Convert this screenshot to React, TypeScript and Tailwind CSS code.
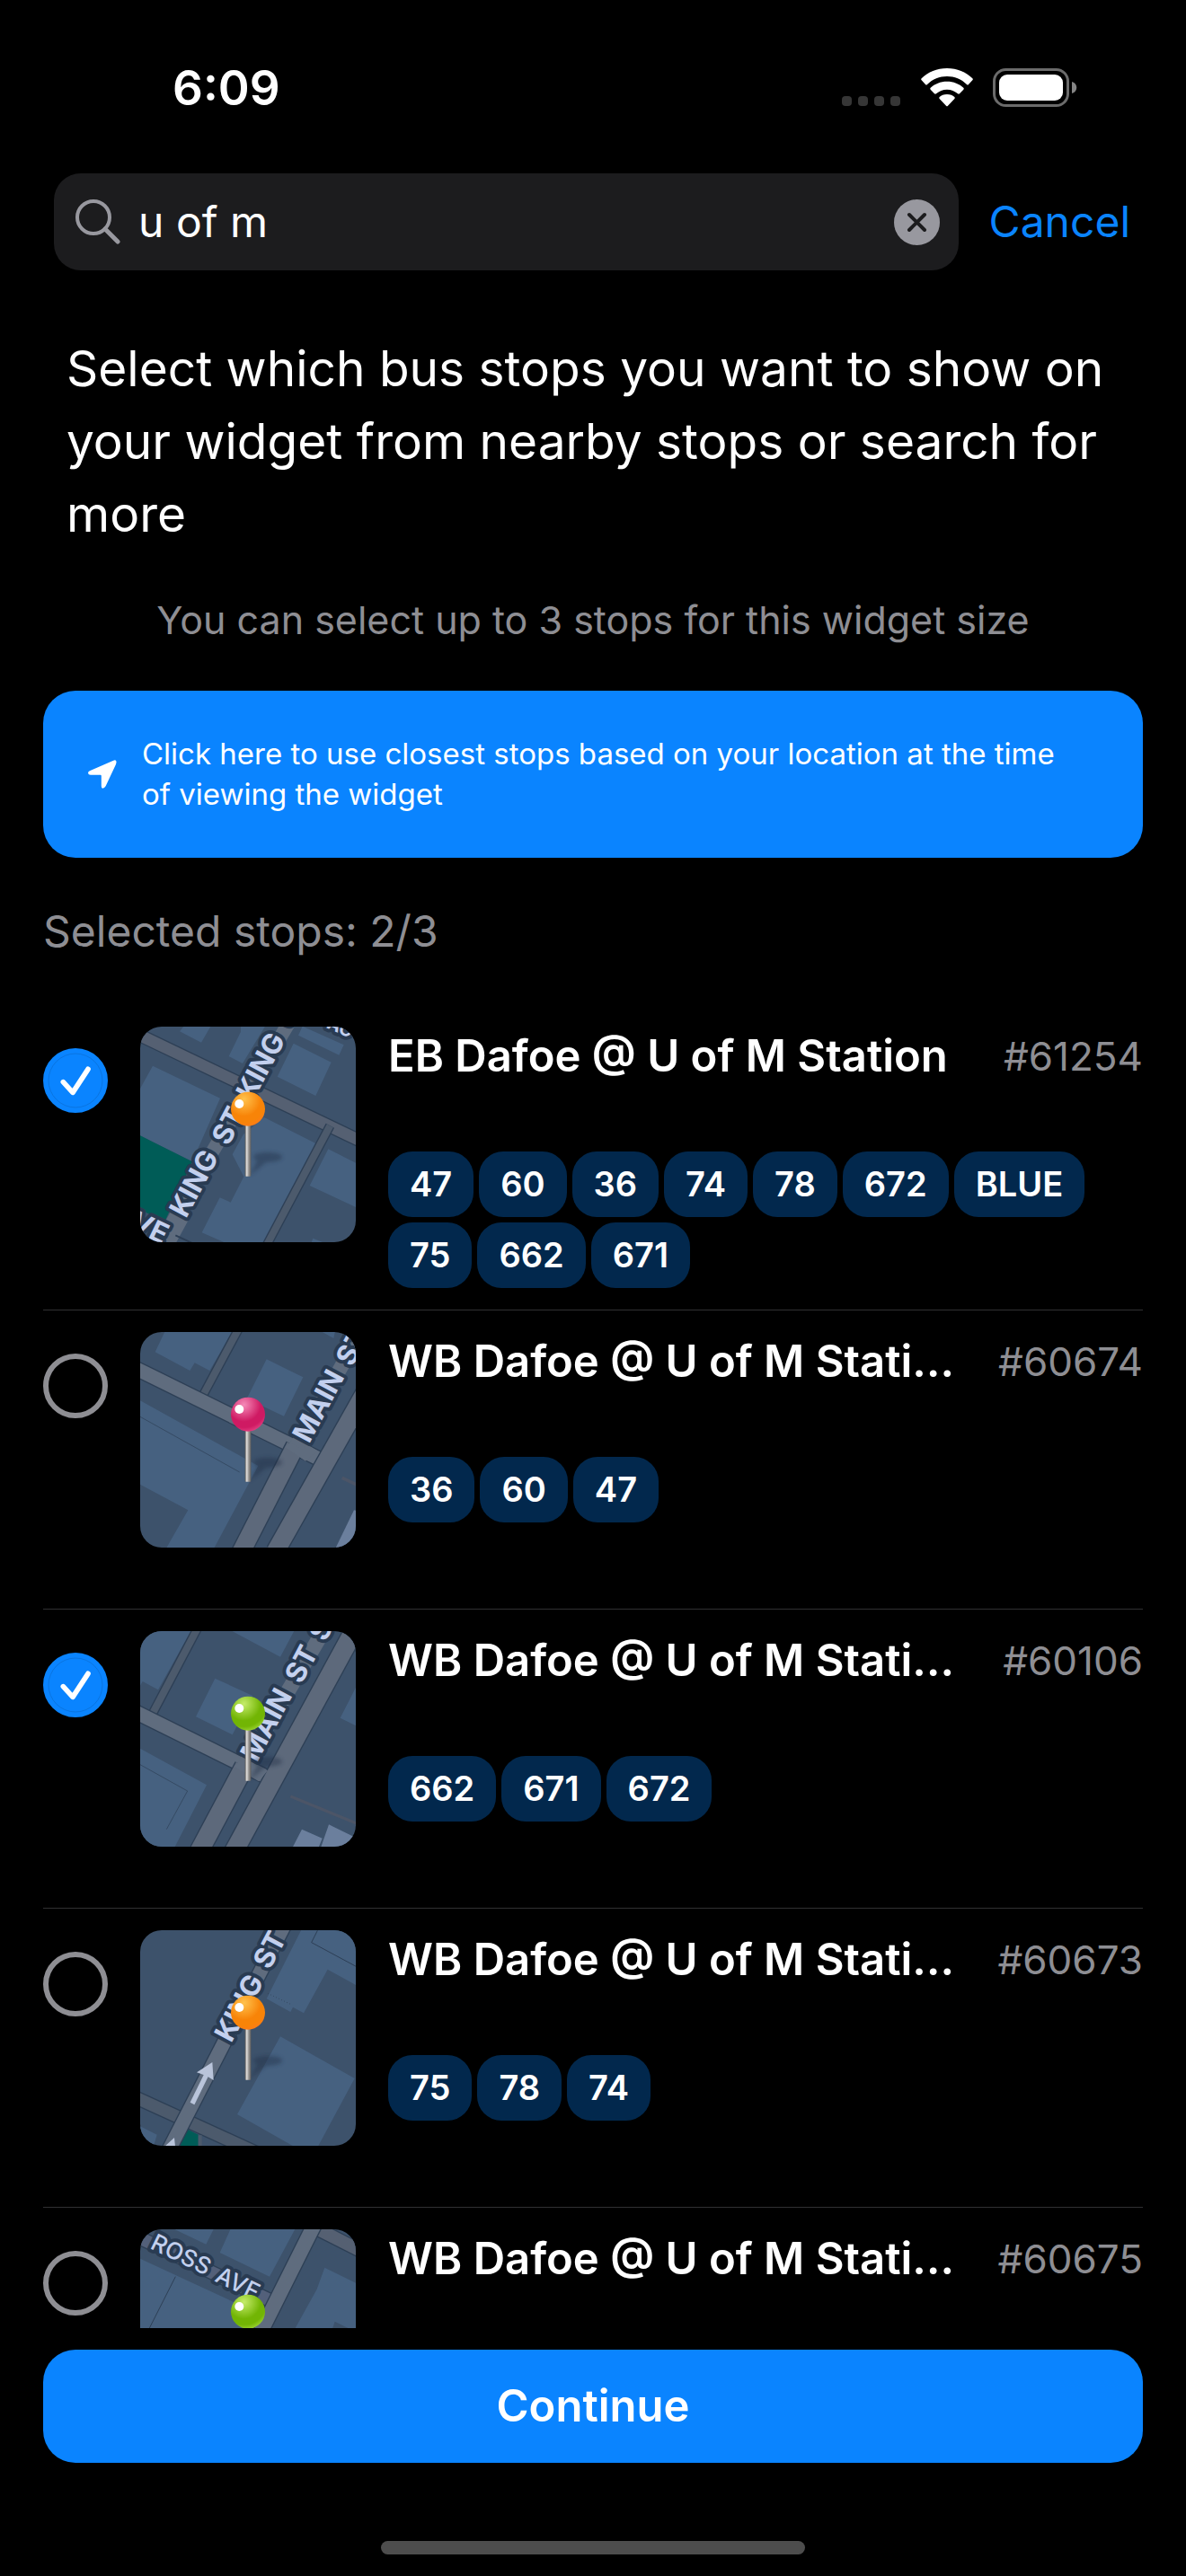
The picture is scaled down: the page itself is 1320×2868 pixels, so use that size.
import React, { useState } from "react";

type PinColor = "orange" | "pink" | "green";

type Stop = {
  name: string;
  code: string;
  routes: string[];
  pin: PinColor;
  map: () => React.ReactElement;
  selected: boolean;
};

const LAND = "#3d526b";
const BUILDING = "#466180";
const ROAD = "#5f6c7e";
const LANE = "#4c5a6c";
const EDGE = "#2d3f55";
const PARK = "#005c57";

const PIN_STOPS: Record<PinColor, [string, string, string]> = {
  orange: ["#ffc24d", "#f88408", "#ff7a1a"],
  pink: ["#f58ab8", "#cf1a63", "#e8488a"],
  green: ["#c5ec6a", "#72b504", "#a4da3c"],
};

function Road({ d, width, color = ROAD }: { d: string; width: number; color?: string }) {
  return (
    <>
      <path d={d} fill="none" stroke={EDGE} strokeWidth={width + 8} />
      <path d={d} fill="none" stroke={color} strokeWidth={width} />
    </>
  );
}

function Label({
  x,
  y,
  angle,
  size = 94,
  weight = 700,
  children,
}: {
  x: number;
  y: number;
  angle: number;
  size?: number;
  weight?: number;
  children: string;
}) {
  return (
    <text
      transform={`translate(${x} ${y}) rotate(${angle})`}
      fontFamily="Inter, sans-serif"
      fontSize={size}
      fontWeight={weight}
      fill="#c3d0ee"
      stroke="#293b52"
      strokeWidth={24}
      strokeLinejoin="round"
      paintOrder="stroke"
    >
      {children}
    </text>
  );
}

function KingStreetMap() {
  return (
    <>
      <path
        fill={BUILDING}
        d="M90 170L315 278L222 490L48 403V246zM200 30H288L252 92L180 55zM384 30H470L390 162L344 138L384 56zM560 95L686 158L634 270L506 206zM590 38L728 100L712 134L576 68zM462 342L640 432L470 760H330L254 727L314 610L350 626L394 540L356 466L392 400zM676 448L768 494V642L614 570zM625 746L660 760H620z"
      />
      <path fill={PARK} d="M48 403L222 490L130 690L48 650z" />
      <Road d="M30 60L790 424" width={38} color="#556072" />
      <Road d="M682 370L470 770" width={24} color={LANE} />
      <path d="M175 650L560 0" stroke={ROAD} strokeWidth={46} fill="none" />
      <path d="M180 670L120 780" stroke={ROAD} strokeWidth={66} fill="none" />
      <path d="M166 736L230 766" stroke={EDGE} strokeWidth={6} fill="none" />
      <Label x={201} y={682} angle={-62}>KING</Label>
      <Label x={342} y={440} angle={-62}>ST</Label>
      <Label x={424} y={290} angle={-62}>KING</Label>
      <Label x={552} y={44} angle={-62}>ST</Label>
      <Label x={8} y={712} angle={26}>VE</Label>
      <Label x={668} y={42} angle={24} size={60}>AC</Label>
    </>
  );
}

function MainStreetMap() {
  return (
    <>
      <path
        fill={BUILDING}
        d="M134 30H360L280 168L230 142L214 168L98 106zM470 130L592 190L528 320L404 262zM48 268L442 486L290 770H130L208 634L48 548zM640 30H700L694 60z"
      />
      <path d="M48 322L380 507" stroke={EDGE} strokeWidth={2} />
      <path fill="#6b7f9d" d="M762 634L790 640V770H696z" />
      <path d="M722 526L790 558" stroke="#4c5567" strokeWidth={11} />
      <Road d="M376 30L258 250" width={24} color={LANE} />
      <Road d="M20 154L660 470" width={46} />
      <Road d="M800 240L500 772" width={60} color="#5d697b" />
      <Road d="M566 420L380 784" width={60} color="#5d697b" />
      <path d="M532 424L566 390L640 436L600 470z" fill={ROAD} />
      <path d="M570 420L790 30" stroke={ROAD} strokeWidth={48} fill="none" />
      <Label x={612} y={414} angle={-62}>MAIN</Label>
      <Label x={756} y={158} angle={-62}>ST</Label>
    </>
  );
}

function MainStreetSouthMap() {
  return (
    <g transform="translate(0 -9)">
      <path
        fill={BUILDING}
        d="M48 40H222L108 244L56 216L48 230zM340 40H566L516 134zM298 206L424 264L356 394L234 334zM48 440L270 562L158 780H48zM768 236V364L716 338z"
      />
      <path d="M48 494L206 582L136 710" stroke={EDGE} strokeWidth={2} fill="none" />
      <path fill="#6b7f9d" d="M588 710L656 740L640 780H552zM678 694L768 738V780H648z" />
      <path d="M550 600L780 694" stroke="#4c5567" strokeWidth={10} />
      <Road d="M244 30L88 326" width={24} color={LANE} />
      <Road d="M20 312L480 540" width={46} />
      <Road d="M780 14L360 786" width={62} color="#5d697b" />
      <Road d="M396 500L246 782" width={62} color="#5d697b" />
      <path d="M362 500L390 470L474 514L444 550z" fill={ROAD} />
      <path d="M400 490L670 30" stroke={ROAD} strokeWidth={50} fill="none" />
      <Label x={438} y={488} angle={-62}>MAIN</Label>
      <Label x={586} y={228} angle={-62}>ST</Label>
      <Label x={666} y={86} angle={-62}>S</Label>
    </g>
  );
}

function KingStreetArrowMap() {
  return (
    <>
      <path
        fill={BUILDING}
        d="M590 30H790V234L674 170L594 316L558 296L550 312L470 268zM516 394L764 534L636 772H580L372 654zM48 694L104 722L90 770H48z"
      />
      <path d="M640 40L620 80L780 166" stroke={EDGE} strokeWidth={3} fill="none" />
      <path d="M474 250L550 286" stroke={EDGE} strokeWidth={2} strokeDasharray="3 7" />
      <Road d="M20 592L440 784" width={40} color={LANE} />
      <path fill={PARK} d="M206 704L242 722V770H176z" />
      <path d="M248 724V770" stroke={LANE} strokeWidth={12} />
      <Road d="M546 -10L130 800" width={46} />
      <path d="M222 618L270 520" stroke="#b9c4da" strokeWidth={16} />
      <path fill="#b9c4da" d="M289 480L293 540L270 526L237 514zM162 732L166 770H120z" />
      <Label x={352} y={418} angle={-62}>KING</Label>
      <Label x={480} y={174} angle={-62}>ST</Label>
    </>
  );
}

function RossAvenueMap() {
  return (
    <g transform="translate(0 3)">
      <path
        fill={BUILDING}
        d="M150 30H296L268 86zM352 30H568L480 194L314 114zM48 134L470 330V800H48zM664 164L790 226V800H340L566 366L638 236z"
      />
      <path fill={LAND} d="M698 344L790 390V420L690 368z" />
      <path d="M166 194L76 372" stroke={EDGE} strokeWidth={3} />
      <Road d="M20 52L500 282" width={42} color="#53607a" />
      <Road d="M650 40L800 116" width={42} color="#556072" />
      <Road d="M640 0L420 440" width={48} />
      <Label x={78} y={98} angle={26} size={78} weight={500}>ROSS</Label>
      <Label x={294} y={208} angle={26} size={78} weight={500}>AVE</Label>
    </g>
  );
}

function MapThumb({ pin, children }: { pin: PinColor; children: React.ReactNode }) {
  const [light, base, rim] = PIN_STOPS[pin];
  return (
    <svg
      viewBox="48 39 720 720"
      className="size-60 shrink-0 rounded-3xl"
      role="img"
      aria-label="Map of the stop"
    >
      <defs>
        <radialGradient id={`head-${pin}`} cx="0.38" cy="0.22" r="0.85">
          <stop offset="0" stopColor={light} />
          <stop offset="0.58" stopColor={base} />
          <stop offset="0.78" stopColor={base} />
          <stop offset="1" stopColor={rim} />
        </radialGradient>
        <linearGradient id="needle" x1="0" x2="1" y1="0" y2="0">
          <stop offset="0" stopColor="#5c5a58" />
          <stop offset="0.3" stopColor="#e4e2e0" />
          <stop offset="0.55" stopColor="#a6a4a2" />
          <stop offset="1" stopColor="#5c5a58" />
        </linearGradient>
        <filter id="soft" x="-50%" y="-50%" width="200%" height="200%">
          <feGaussianBlur stdDeviation="6" />
        </filter>
      </defs>
      <rect x="48" y="39" width="720" height="720" fill={LAND} />
      {children}
      <g filter="url(#soft)" fill="#1c2c42" opacity="0.4">
        <ellipse cx="474" cy="475" rx="48" ry="17" />
        <path d="M412 538L440 485L474 488z" />
      </g>
      <rect x="398" y="362" width="20" height="177" rx="3" fill="url(#needle)" />
      <circle cx="408" cy="314" r="57" fill={`url(#head-${pin})`} />
      <circle cx="379" cy="297" r="15" fill="#fff" />
    </svg>
  );
}

const STOPS: Stop[] = [
  {
    name: "EB Dafoe @ U of M Station",
    code: "#61254",
    routes: ["47", "60", "36", "74", "78", "672", "BLUE", "75", "662", "671"],
    pin: "orange",
    map: KingStreetMap,
    selected: true,
  },
  {
    name: "WB Dafoe @ U of M Station",
    code: "#60674",
    routes: ["36", "60", "47"],
    pin: "pink",
    map: MainStreetMap,
    selected: false,
  },
  {
    name: "WB Dafoe @ U of M Station",
    code: "#60106",
    routes: ["662", "671", "672"],
    pin: "green",
    map: MainStreetSouthMap,
    selected: true,
  },
  {
    name: "WB Dafoe @ U of M Station",
    code: "#60673",
    routes: ["75", "78", "74"],
    pin: "orange",
    map: KingStreetArrowMap,
    selected: false,
  },
  {
    name: "WB Dafoe @ U of M Station",
    code: "#60675",
    routes: [],
    pin: "green",
    map: RossAvenueMap,
    selected: false,
  },
];

function StatusBar() {
  return (
    <div className="flex h-[193px] shrink-0 items-center justify-between pt-0.5 pr-[120px] pl-[192px]">
      <span className="text-[53px] leading-[60px] font-semibold">6:09</span>
      <div className="flex items-end">
        <svg viewBox="0 0 66 43" className="mr-[22px] h-[43px] w-[66px]" fill="#363636" aria-hidden="true">
          <rect x="0" y="31" width="11" height="11" rx="4" />
          <rect x="18" y="31" width="11" height="11" rx="4" />
          <rect x="36" y="31" width="11" height="11" rx="4" />
          <rect x="54" y="31" width="11" height="11" rx="4" />
        </svg>
        <svg viewBox="0 0 174 129" className="mr-[22px] h-[43px] w-[58px]" fill="#fff" aria-hidden="true">
          <path d="M87 0C121 0 150 12 172 34Q175 37 172 40L159 54Q156 57 153 54C135 36 112 27 87 27S39 36 21 54Q18 57 15 54L2 40Q-1 37 2 34C24 12 53 0 87 0Z" />
          <path d="M87 44C109 44 128 52 142 65Q145 68 142 71L129 85Q126 87 123 85C113 76 101 71 87 71S61 76 51 85Q48 87 45 85L32 71Q29 68 32 65C46 52 65 44 87 44Z" />
          <path d="M87 87C98 87 106 91 112 96Q115 99 112 102L90 125Q87 128 84 125L62 102Q59 99 62 96C68 91 76 87 87 87Z" />
        </svg>
        <svg viewBox="0 0 95 43" className="h-[43px] w-[95px]" aria-hidden="true">
          <rect x="1.5" y="1.5" width="82" height="40" rx="13" fill="none" stroke="#6b6b6b" strokeWidth="3" />
          <rect x="7" y="7" width="71" height="29" rx="9" fill="#fff" />
          <path d="M88 15C95 17 95 26 88 28Z" fill="#858585" />
        </svg>
      </div>
    </div>
  );
}

function SearchRow() {
  const [query, setQuery] = useState("u of m");
  return (
    <div className="flex shrink-0 items-center gap-[34px] pr-[62px] pl-[60px]">
      <div className="flex h-[108px] min-w-0 flex-1 items-center rounded-[30px] bg-[#1c1c1e] pr-[21px] pl-6">
        <svg viewBox="0 0 50 50" className="size-[50px] shrink-0" fill="none" stroke="#98989f" strokeLinecap="round" aria-hidden="true">
          <circle cx="20" cy="20" r="18" strokeWidth="4" />
          <path d="M33 33L47 47" strokeWidth="5" />
        </svg>
        <input
          type="text"
          aria-label="Search stops"
          value={query}
          onChange={(event) => setQuery(event.target.value)}
          className="ml-5 min-w-0 flex-1 bg-transparent text-[48px] leading-[60px] text-white outline-none"
        />
        <button type="button" aria-label="Clear search" onClick={() => setQuery("")} className="shrink-0">
          <svg viewBox="0 0 51 51" className="size-[51px]" aria-hidden="true">
            <circle cx="25.5" cy="25.5" r="25.5" fill="#98989f" />
            <path d="M17 17L34 34M34 17L17 34" stroke="#1c1c1e" strokeWidth="4" strokeLinecap="round" />
          </svg>
        </button>
      </div>
      <button type="button" className="text-[48px] leading-[60px] text-[#0a84ff]">
        Cancel
      </button>
    </div>
  );
}

function StopRow({ stop }: { stop: Stop }) {
  const Map = stop.map;
  const [checked, setChecked] = useState(stop.selected);
  return (
    <li className="border-b border-[#303032] py-6">
      <label className="flex min-h-[284px] items-start gap-9">
        <span className="mt-6 grid size-[72px] shrink-0">
          <input
            type="checkbox"
            checked={checked}
            onChange={(event) => setChecked(event.target.checked)}
            className="peer size-[72px] appearance-none rounded-full border-[6px] border-[#8e8e93] [grid-area:1/1] checked:border-[#0a84ff] checked:bg-[#0a84ff]"
          />
          <svg
            viewBox="0 0 216 216"
            className="pointer-events-none invisible size-[72px] [grid-area:1/1] peer-checked:visible"
            fill="none"
            aria-hidden="true"
          >
            <circle cx="108" cy="108" r="90" stroke="#0a6cd0" strokeWidth="2" />
            <path d="M67 113L99 148L150 70" stroke="#fff" strokeWidth="17" strokeLinecap="round" strokeLinejoin="round" />
          </svg>
        </span>
        <MapThumb pin={stop.pin}>
          <Map />
        </MapThumb>
        <span className="min-w-0 flex-1">
          <span className="flex items-center gap-12">
            <span className="min-w-0 flex-1 truncate text-[49px] leading-[66px] font-semibold">{stop.name}</span>
            <span className="shrink-0 text-[44px] leading-[66px] text-[#8e8e93]">{stop.code}</span>
          </span>
          <span className="mt-[73px] flex flex-wrap gap-1.5">
            {stop.routes.map((route) => (
              <span
                key={route}
                className="rounded-[27px] bg-[#02284d] px-6 text-[38px] leading-[73px] font-semibold"
              >
                {route}
              </span>
            ))}
          </span>
        </span>
      </label>
    </li>
  );
}

export default function App() {
  return (
    <main className="flex h-screen flex-col overflow-hidden bg-black font-['Inter',sans-serif] text-white">
      <StatusBar />
      <SearchRow />
      <h1 className="mt-[69px] shrink-0 px-[74px] text-[55px] leading-[81px] font-normal">
        Select which bus stops you want to show on your widget from nearby stops or search for more
      </h1>
      <p className="mt-[50px] shrink-0 text-center text-[43px] leading-[54px] text-[#8e8e93]">
        You can select up to 3 stops for this widget size
      </p>
      <button
        type="button"
        className="mx-12 mt-[52px] flex shrink-0 items-center rounded-[36px] bg-[#0a84ff] py-12 pr-[72px] pl-[50px] text-left"
      >
        <svg viewBox="0 0 93 93" className="size-8 shrink-0" fill="#fff" aria-hidden="true">
          <path d="M82 2Q94 -2 91 11Q90 15 88 19L57 85Q53 92 47 92Q43 92 43 85V52Q43 49 40 49H8Q1 49 0 43Q0 37 7 35Z" />
        </svg>
        <span className="ml-7 text-[33px] leading-[45px]">
          Click here to use closest stops based on your location at the time of viewing the widget
        </span>
      </button>
      <h2 className="mx-12 mt-[52px] shrink-0 text-[48px] leading-[60px] font-normal text-[#8e8e93]">
        Selected stops: 2/3
      </h2>
      <ul className="mx-12 mt-[52px] min-h-0 flex-1 overflow-y-auto [scrollbar-width:none]">
        {STOPS.map((stop) => (
          <StopRow key={stop.code} stop={stop} />
        ))}
      </ul>
      <button
        type="button"
        className="mx-12 mt-6 shrink-0 rounded-[36px] bg-[#0a84ff] py-[33px] text-[49px] leading-[60px] font-semibold"
      >
        Continue
      </button>
      <div className="mx-auto mt-[87px] mb-6 h-[15px] w-[472px] shrink-0 rounded-full bg-[#4d4d4d]" />
    </main>
  );
}
